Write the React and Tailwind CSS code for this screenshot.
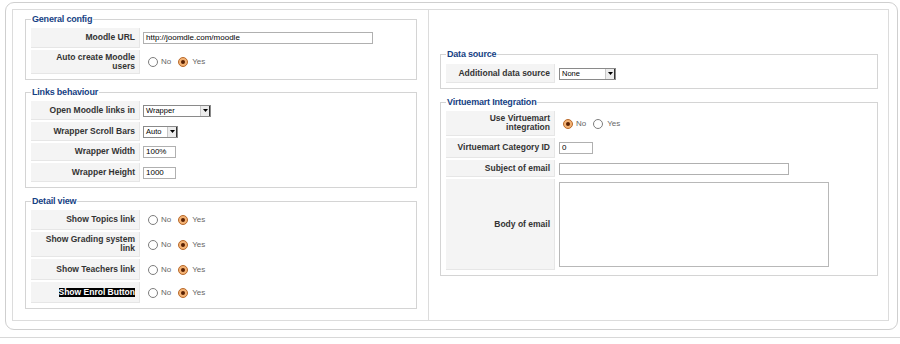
import React from 'react';

function Radio({ checked }) {
  if (checked) {
    return (
      <span className="w-[10px] h-[10px] rounded-full border border-[#b86a2c] bg-[#f3b274] flex items-center justify-center shrink-0">
        <span className="w-[4px] h-[4px] rounded-full bg-[#5a2000]" />
      </span>
    );
  }
  return <span className="w-[10px] h-[10px] rounded-full border border-[#7d7d7d] bg-white shrink-0" />;
}

function YesNo({ yes = true }) {
  return (
    <div className="flex items-center ml-[5px] text-[8px] text-[#666]">
      <Radio checked={!yes} />
      <span className="ml-[3px]">No</span>
      <span className="ml-[7px]" />
      <Radio checked={yes} />
      <span className="ml-[4px]">Yes</span>
    </div>
  );
}

function Select({ value, width }) {
  return (
    <div className={`flex h-[12px] border border-[#8a8a8a] bg-white ${width}`}>
      <span className="flex-1 pl-[2px] text-[7.5px] leading-[10px] text-black">{value}</span>
      <span className="w-[10px] h-full bg-[#ececec] border-l border-[#c8c8c8] border-r border-r-[#333] flex items-center justify-center">
        <svg width="5" height="3" viewBox="0 0 5 3">
          <path d="M0 0h5L2.5 3z" fill="#000" />
        </svg>
      </span>
    </div>
  );
}

function TextInput({ value = '', width }) {
  return (
    <div className={`h-[12px] border border-[#b0b0b0] bg-white pl-[2px] text-[8px] leading-[10px] text-black ${width}`}>
      {value}
    </div>
  );
}

function Row({ label, h, children }) {
  return (
    <div className={`flex ${h}`}>
      <div className="w-[109px] shrink-0 bg-[#f4f4f4] border-r border-b border-[#e6e6e6] flex items-center justify-end pr-[4px] text-right text-[8.5px] leading-[9px] font-bold text-[#333] whitespace-nowrap">
        {label}
      </div>
      <div className="flex-1 flex items-center pl-[3px]">{children}</div>
    </div>
  );
}

function Group({ title, className = '', children }) {
  return (
    <fieldset className={`border border-[#d4d4d4] px-[5px] pb-[5px] ${className}`}>
      <legend className="px-[1px] text-[9px] leading-[11px] font-bold tracking-[-0.2px] text-[#163f84]">{title}</legend>
      <div className="flex flex-col gap-[2px]">{children}</div>
    </fieldset>
  );
}

export default function App() {
  return (
    <div className="w-[900px] h-[344px] bg-white overflow-hidden font-['Liberation_Sans',Arial,sans-serif]">
      <div className="ml-[5px] mt-[2px] w-[893px] h-[328px] border border-[#cfcfcf] rounded-[9px] pt-[6px] pl-[6px]">
        <div className="w-[877px] h-[312px] border border-[#dcdcdc] flex">
          {/* left column */}
          <div className="w-[416px] border-r border-[#dcdcdc] pl-[12px] pr-[11px] flex flex-col justify-center pb-[7px]">
            <Group title="General config" className="pt-[3px]">
              <Row label="Moodle URL" h="h-[20px]">
                <TextInput value="http://joomdle.com/moodle" width="w-[230px]" />
              </Row>
              <Row label={<span>Auto create Moodle<br />users</span>} h="h-[24px]">
                <YesNo />
              </Row>
            </Group>
            <Group title="Links behaviour" className="mt-[7px] pt-[3px]">
              <Row label="Open Moodle links in" h="h-[19px]">
                <Select value="Wrapper" width="w-[68px]" />
              </Row>
              <Row label="Wrapper Scroll Bars" h="h-[19px]">
                <Select value="Auto" width="w-[35px]" />
              </Row>
              <Row label="Wrapper Width" h="h-[18px]">
                <TextInput value="100%" width="w-[33px]" />
              </Row>
              <Row label="Wrapper Height" h="h-[19px]">
                <TextInput value="1000" width="w-[33px]" />
              </Row>
            </Group>
            <Group title="Detail view" className="mt-[8px] pt-[3px]">
              <Row label="Show Topics link" h="h-[20px]">
                <YesNo />
              </Row>
              <Row label={<span>Show Grading system<br />link</span>} h="h-[25px]">
                <YesNo />
              </Row>
              <Row label="Show Teachers link" h="h-[21px]">
                <YesNo />
              </Row>
              <Row label={<span className="bg-black text-white">Show Enrol Button</span>} h="h-[21px]">
                <YesNo />
              </Row>
            </Group>
          </div>

          {/* right column */}
          <div className="flex-1 pl-[11px] pr-[10px] flex flex-col justify-center pb-[5px]">
            <Group title="Data source" className="pt-[4px]">
              <Row label="Additional data source" h="h-[19px]">
                <div className="ml-[1px]">
                  <Select value="None" width="w-[57px]" />
                </div>
              </Row>
            </Group>
            <Group title="Virtuemart Integration" className="mt-[8px] pt-[3px]">
              <Row label={<span>Use Virtuemart<br />integration</span>} h="h-[25px]">
                <YesNo yes={false} />
              </Row>
              <Row label="Virtuemart Category ID" h="h-[20px]">
                <div className="ml-[1px]">
                  <TextInput value="0" width="w-[34px]" />
                </div>
              </Row>
              <Row label="Subject of email" h="h-[17px]">
                <div className="ml-[1px]">
                  <TextInput width="w-[230px]" />
                </div>
              </Row>
              <Row label="Body of email" h="h-[91px]">
                <div className="ml-[1px] w-[270px] h-[85px] border border-[#b8b8b8] bg-white" />
              </Row>
            </Group>
          </div>
        </div>
      </div>
      <div className="mt-[7px] h-px bg-[#d8d8d8]" />
    </div>
  );
}
